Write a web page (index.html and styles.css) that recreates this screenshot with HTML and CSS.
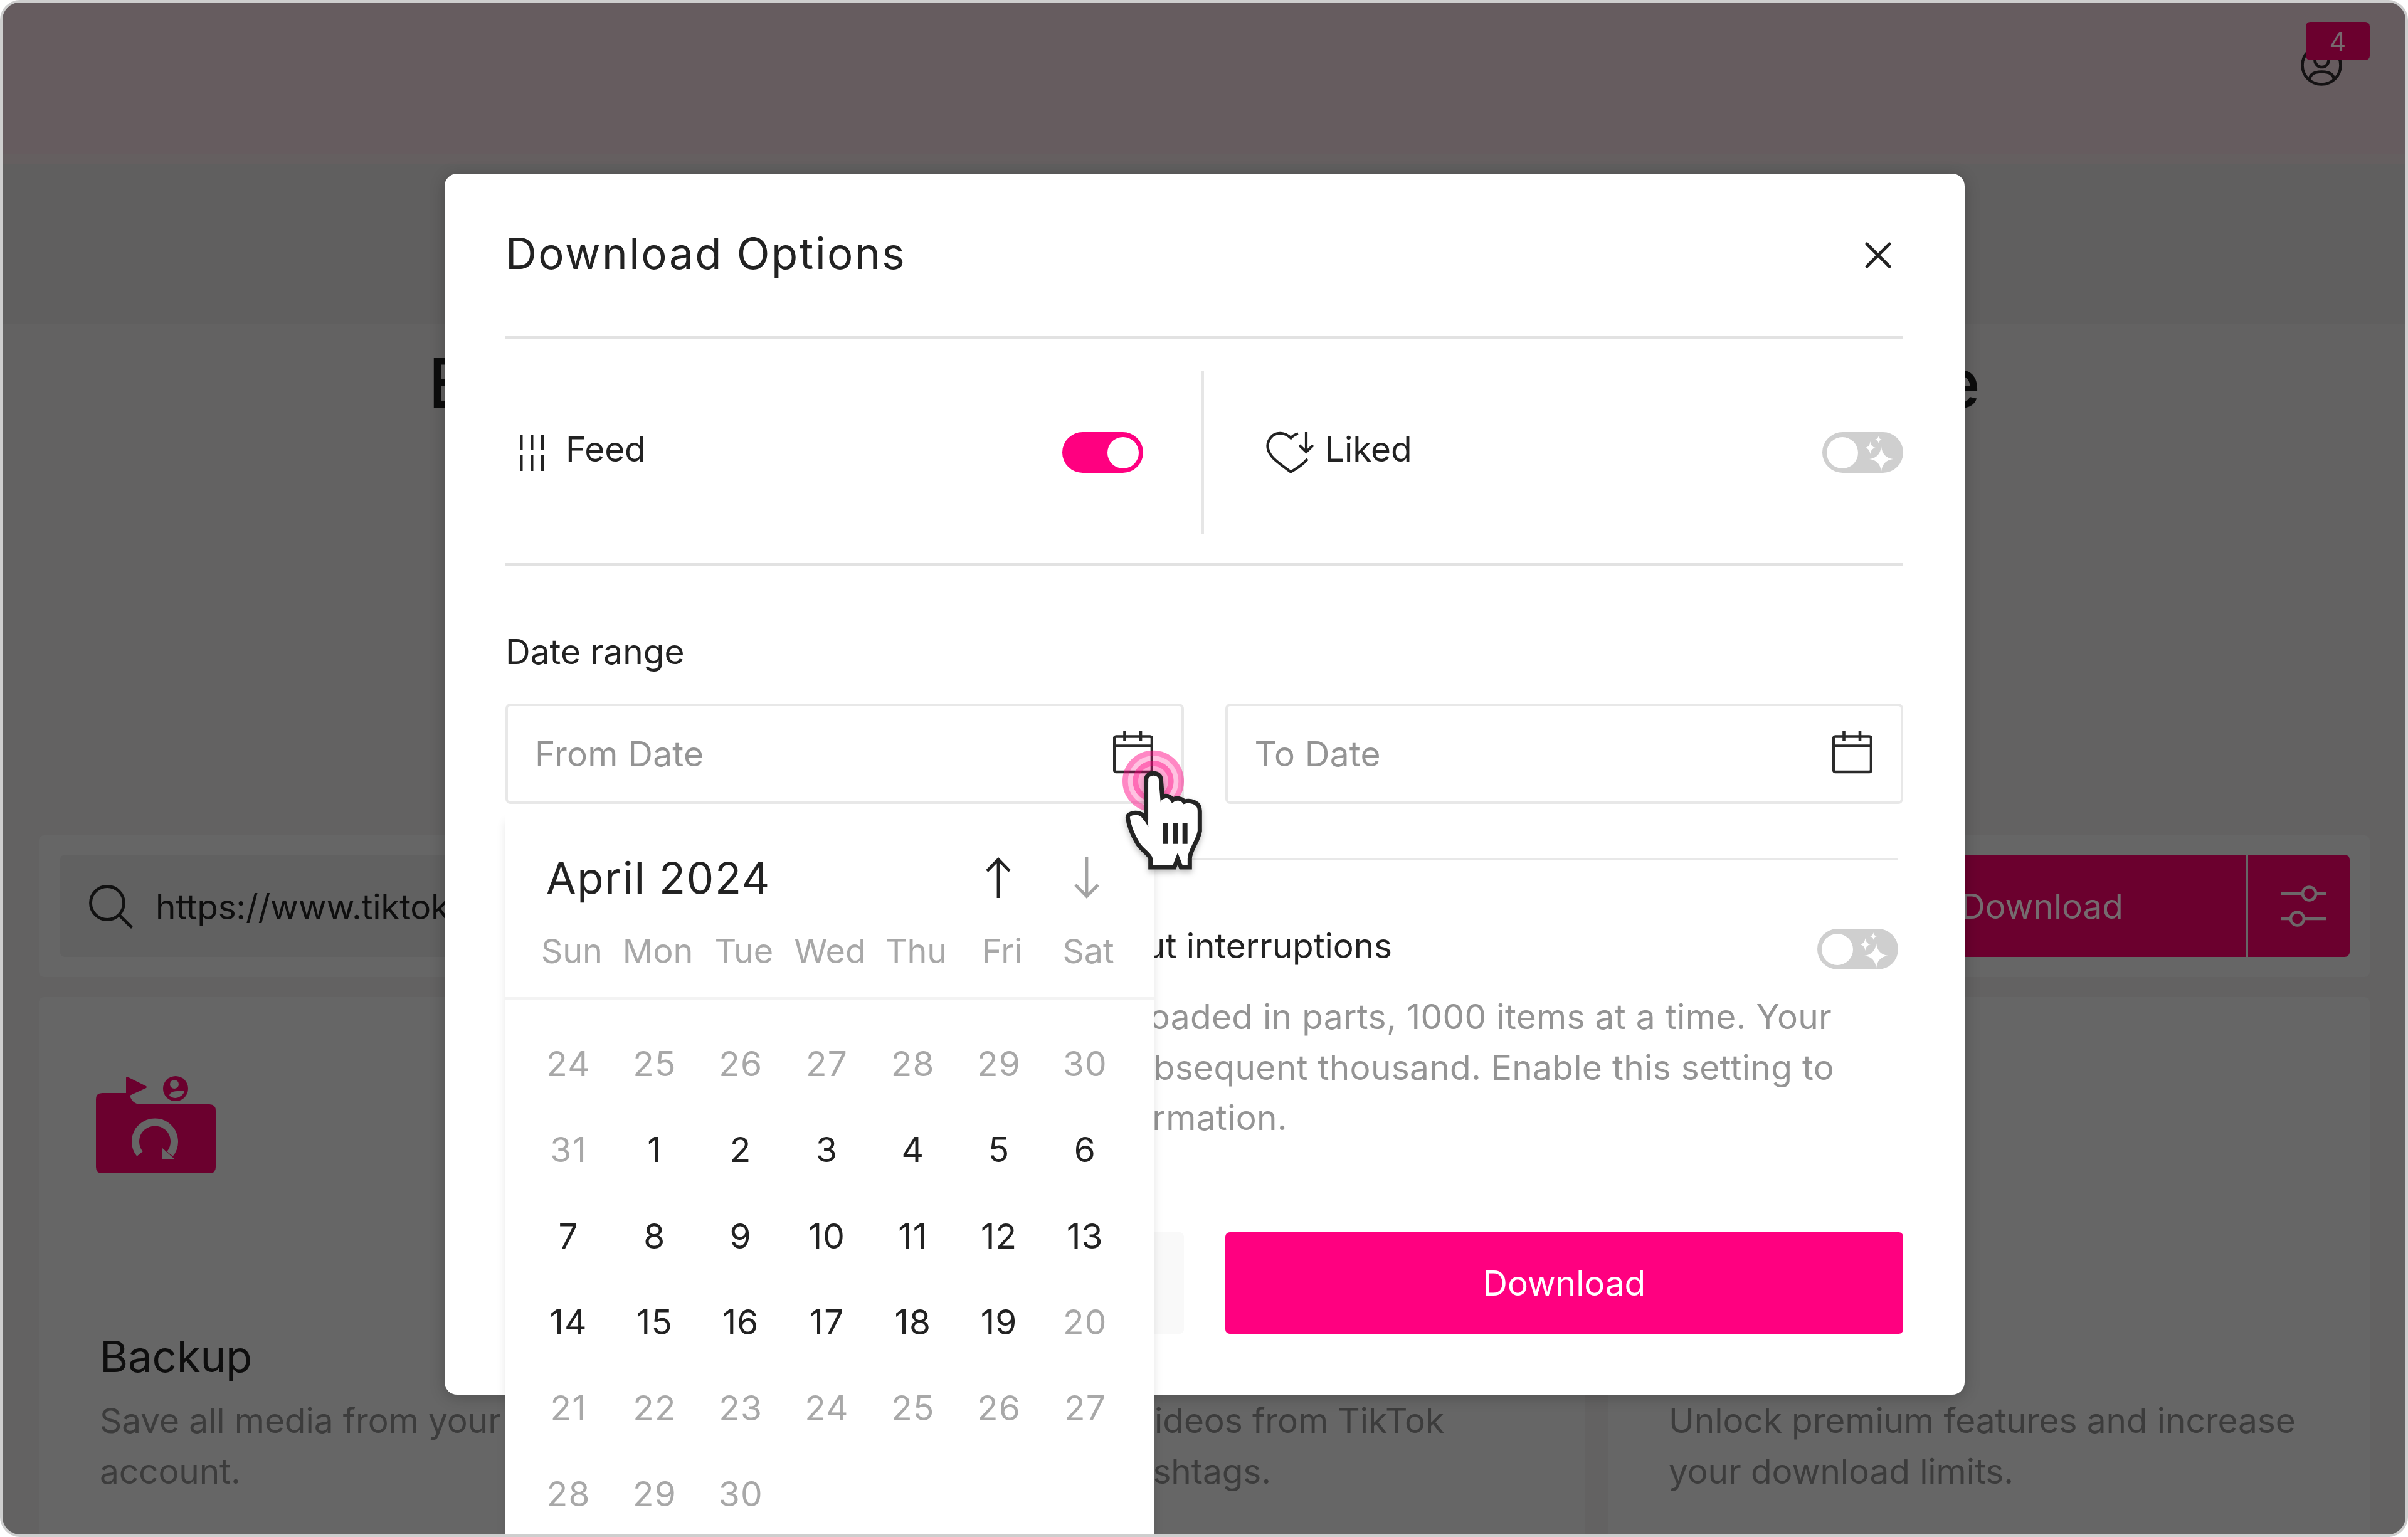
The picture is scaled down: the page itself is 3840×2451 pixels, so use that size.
FILE: index.html
```html
<!DOCTYPE html>
<html lang="en">
<head>
<meta charset="utf-8">
<title>Download Options</title>
<link rel="stylesheet" href="styles.css">
</head>
<body>
<svg class="defs" width="0" height="0" aria-hidden="true">
  <symbol id="calendar" viewBox="0 0 64 68">
    <path d="M5 8.500H59a3 3 0 0 1 3 3V62a3 3 0 0 1-3 3H5a3 3 0 0 1-3-3V11.500a3 3 0 0 1 3-3ZM2 23.500H62M18.500 0V16M44 0V16" fill="none" stroke="currentColor" stroke-width="4.600"/>
  </symbol>
  <symbol id="sparkles" viewBox="0 0 48 60">
    <path d="M25 20Q27 38 44 40Q27 42 25 60Q23 42 6 40Q23 38 25 20ZM7.500 12Q8.500 21 16 22Q8.500 23 7.500 32Q6.500 23-1 22Q6.500 21 7.500 12ZM20.500 3Q21 8 26 9Q21 10 20.500 15Q20 10 15 9Q20 8 20.500 3Z" fill="#fff"/>
  </symbol>
</svg>
<div class="frame">
  <div class="app">
    <header class="topbar">
      <div class="account">
        <svg width="68" height="68" viewBox="0 0 68 68" fill="none" stroke="#141213" stroke-width="4.600"><circle cx="34" cy="34" r="30.500"/><circle cx="34.500" cy="26" r="11"/><path d="M15 58C15 49 22 44.500 34.500 44.500S54 49 54 58"/></svg>
        <span class="badge">4</span>
      </div>
    </header>
    <div class="hero"></div>
    <h1 class="headline">Easily download TikTok videos in one place</h1>
    <div class="search-card">
      <div class="search-field">
        <svg width="72" height="72" viewBox="0 0 72 72" fill="none" stroke="#111" stroke-width="4.800" stroke-linecap="round"><circle cx="30" cy="31" r="26.500"/><path d="M49 50L68 69"/></svg>
        <span>https://www.tiktok.com/</span>
      </div>
      <div class="search-button">Download</div>
      <div class="search-options">
        <svg width="74" height="66" viewBox="0 0 74 66" fill="none" stroke="#6d6769" stroke-width="4.600"><path d="M1 13H35M58 13H73M1 53H16M39 53H73"/><circle cx="46.500" cy="13" r="10.500"/><circle cx="27.500" cy="53" r="10.500"/></svg>
      </div>
    </div>
    <div class="cards">
      <section class="card">
        <svg class="card-icon" width="192" height="156" viewBox="0 0 192 156" fill="#6b002e">
          <path d="M50 1Q48 0 48 3V27H10Q0 27 0 37V145Q0 155 10 155H181Q191 155 191 145V55Q191 45 181 45H72Q58 45 54 31L80 19Q82 17.500 80 16Z"/>
          <circle cx="127" cy="20" r="20"/>
          <circle cx="125" cy="13" r="7" fill="#666"/>
          <path d="M117 31Q118 22 141 24Q139 33 127 35Q121 35 117 31Z" fill="#666"/>
          <path d="M70 124A31 31 0 1 1 118 124" fill="none" stroke="#666" stroke-width="12"/>
          <path d="M105 114V133H126Z" fill="#666"/>
        </svg>
        <h2>Backup</h2>
        <p>Save all media from your<br>account.</p>
      </section>
      <section class="card card-search">
        <p><span class="l1">ideos from TikTok</span><span class="l2">shtags.</span></p>
      </section>
      <section class="card">
        <p>Unlock premium features and increase<br>your download limits.</p>
      </section>
    </div>
  </div>

  <div class="modal">
    <div class="modal-head">
      <h2>Download Options</h2>
      <svg width="44" height="44" viewBox="0 0 44 44" fill="none" stroke="#222" stroke-width="5" stroke-linecap="round"><path d="M4 4L40 40M40 4L4 40"/></svg>
    </div>
    <div class="sources">
      <div class="source feed">
        <svg width="40" height="58" viewBox="0 0 40 58" stroke="#222" stroke-width="4"><path d="M2.500 0V25M19.500 0V25M36 0V25M2.500 33V58M19.500 33V58M36 33V58"/></svg>
        <span class="label">Feed</span>
        <span class="toggle on"><i></i></span>
      </div>
      <div class="split"></div>
      <div class="source liked">
        <svg width="78" height="68" viewBox="0 0 78 68" fill="none" stroke="#222" stroke-width="4.200"><path d="M51 3.500Q43 6 39.500 10.500C30 1 16 0 8 9C-2 21 3 34 12 43C20 51 29 57 39.500 64.500C51 58 59 52 66 44"/><path d="M64 1V32M53 22L64 32.500L75 22"/></svg>
        <span class="label">Liked</span>
        <span class="toggle"><i></i><svg width="48" height="60"><use href="#sparkles"/></svg></span>
      </div>
    </div>
    <div class="range-title">Date range</div>
    <div class="range">
      <div class="field">
        <span>From Date</span>
        <svg class="cal" width="64" height="68"><use href="#calendar"/></svg>
        <div class="picker">
          <div class="picker-head">
            <div class="month">
              <span>April 2024</span>
              <svg class="up" width="40" height="66" viewBox="0 0 40 66" fill="none" stroke="#222" stroke-width="4.800"><path d="M20 65V4M2 22L20 3.500L38 22"/></svg>
              <svg class="down" width="40" height="66" viewBox="0 0 40 66" fill="none" stroke="#a3a3a3" stroke-width="4.800"><path d="M20 0V62M2 44L20 62.500L38 44"/></svg>
            </div>
            <div class="week names"><span>Sun</span><span>Mon</span><span>Tue</span><span>Wed</span><span>Thu</span><span>Fri</span><span>Sat</span></div>
          </div>
          <div class="week days">
            <span class="off">24</span><span class="off">25</span><span class="off">26</span><span class="off">27</span><span class="off">28</span><span class="off">29</span><span class="off">30</span>
            <span class="off">31</span><span>1</span><span>2</span><span>3</span><span>4</span><span>5</span><span>6</span>
            <span>7</span><span>8</span><span>9</span><span>10</span><span>11</span><span>12</span><span>13</span>
            <span>14</span><span>15</span><span>16</span><span>17</span><span>18</span><span>19</span><span class="off">20</span>
            <span class="off">21</span><span class="off">22</span><span class="off">23</span><span class="off">24</span><span class="off">25</span><span class="off">26</span><span class="off">27</span>
            <span class="off">28</span><span class="off">29</span><span class="off">30</span>
          </div>
        </div>
      </div>
      <div class="field">
        <span>To Date</span>
        <svg class="cal" width="64" height="68"><use href="#calendar"/></svg>
      </div>
    </div>
    <div class="batch">
      <div class="batch-head">
        <span class="batch-title">ut interruptions</span>
        <span class="toggle"><i></i><svg width="48" height="60"><use href="#sparkles"/></svg></span>
      </div>
      <p class="batch-text"><span class="t1">oaded in parts, 1000 items at a time. Your</span><span class="t2">bsequent thousand. Enable this setting to</span><span class="t3">rmation.</span></p>
    </div>
    <div class="actions">
      <div class="btn cancel"></div>
      <div class="btn primary">Download</div>
    </div>
  </div>

  <svg class="pointer" width="400" height="340" viewBox="0 0 1200 1020">
    <circle cx="567" cy="497" r="147" fill="#ff0080" fill-opacity=".24"/>
    <circle cx="567" cy="497" r="134" fill="none" stroke="#ff0080" stroke-opacity=".3" stroke-width="26"/>
    <circle cx="567" cy="497" r="98" fill="#ff0080" fill-opacity=".12"/>
    <circle cx="567" cy="497" r="85" fill="none" stroke="#ff0080" stroke-opacity=".36" stroke-width="26"/>
    <g class="hand">
      <path d="M554 909V868C550 848 512 828 492 795C468 755 450 705 445 672C445 650 480 645 500 651C516 656 527 666 533 680V490C533 450 604 450 604 490L611 576C625 560 650 570 660 587C675 575 705 578 715 595C740 587 790 594 790 640V735C785 780 742 828 742 868V909H700L684 868L668 909Z" fill="#fff" stroke="#242424" stroke-width="21" stroke-linejoin="miter"/>
      <path d="M533 650V665Q541 678 544 716Q530 690 510 668Z" fill="#242424"/>
      <path d="M544 680V500H594L600 600H700V720H560Z" fill="#fff"/>
      <path d="M600 600Q612 572 632 588Q645 594 657 608Q668 592 690 596Q703 600 716 618L720 650H600Z" fill="#fff"/>
      <path d="M626 697V797M672 697V797M719 697V797" stroke="#242424" stroke-width="24"/>
    </g>
  </svg>
</div>
</body>
</html>
```
FILE: styles.css
```css
* { box-sizing: border-box; }
body { margin: 0; background: #fff; font-family: Inter, "Liberation Sans", sans-serif; font-size: 55px; font-weight: 400; color: #222; letter-spacing: -.1px; }
h1, h2, p { margin: 0; font-weight: 400; }
svg { display: block; flex: none; }
.defs { position: absolute; }
.frame { position: relative; width: 3840px; height: 2451px; border: 4px solid #cecece; border-radius: 32px; overflow: hidden; background: #636262; }

/* dimmed page behind the dialog */
.topbar { height: 258px; background: linear-gradient(#665c5f 241px, #655f60 241px); display: flex; justify-content: flex-end; padding: 66px 100px 0 0; }
.account { position: relative; width: 68px; height: 68px; }
.badge { position: absolute; left: 9px; top: -35px; width: 102px; height: 61px; border-radius: 7px; background: #6b002e; color: #77686e; font-size: 41px; line-height: 63px; text-align: center; letter-spacing: 0; }
.hero { height: 255px; background: #605f5f; }
.headline { width: 2475px; margin: 33px auto 0 679px; font-size: 109px; line-height: 120px; font-weight: 500; color: #0c0c0c; white-space: nowrap; text-align-last: justify; }
.search-card { margin: 662px 57px 0 58px; height: 226px; padding: 31px 32px 32px 34px; background: #666; border-radius: 8px; display: flex; }
.search-field { flex: 1; background: #616161; border-radius: 8px; display: flex; align-items: center; padding-left: 45px; gap: 35px; color: #0e0e0e; line-height: 64px; letter-spacing: -.3px; }
.search-field span { padding-top: 2px; }
.search-button { width: 652px; padding-left: 2px; background: #6b002e; color: #756b6f; display: flex; align-items: center; justify-content: center; }
.search-options { width: 162px; margin-left: 4px; padding-left: 14px; background: #6b002e; border-radius: 0 8px 8px 0; display: flex; align-items: center; justify-content: center; }
.cards { margin: 32px 57px 0 58px; display: grid; grid-template-columns: repeat(3, minmax(0, 1fr)); gap: 36px; height: 900px; }
.card { background: #666; border-radius: 8px; padding: 126px 97px 0; display: flex; flex-direction: column; }
.card-icon { margin-left: -6px; }
.card h2 { margin-top: 251px; font-size: 69px; line-height: 80px; color: #0e0e0e; letter-spacing: -.2px; }
.card p { margin-top: 22px; line-height: 81px; color: #3c3c3c; white-space: nowrap; }
.card:not(:first-child) p { margin-top: 509px; }
.card-search p span { display: block; text-align: right; }
.card-search .l1 { width: 893px; }
.card-search .l2 { width: 617px; }

/* dialog */
.modal { position: absolute; left: 705px; top: 273px; width: 2424px; height: 1947px; background: #fff; border-radius: 20px; padding: 0 98px 0 97px; box-shadow: 0 4px 24px rgba(0,0,0,.22); }
.modal-head { height: 263px; border-bottom: 4px solid #e2e2e2; display: flex; align-items: center; justify-content: space-between; padding: 0 18px 6px 0; }
.modal-head h2 { font-size: 69px; line-height: 84px; letter-spacing: 2.5px; }
.modal-head svg { margin-top: 6px; }
.sources { height: 362px; border-bottom: 4px solid #e2e2e2; display: flex; align-items: center; }
.source { display: flex; align-items: center; }
.feed { flex: 0 0 1110px; padding: 5px 93px 0 23px; }
.liked { flex: 1; padding: 5px 0 0 99px; }
.split { width: 4px; height: 260px; margin-top: 3px; background: #e6e6e6; }
.label { flex: 1; line-height: 70px; margin: -11px 0 0 33px; }
.liked .label { margin-left: 16px; }
.toggle { width: 129px; height: 65px; border-radius: 33px; background: #cfcfcf; display: flex; align-items: center; padding: 0 7px; }
.toggle i { width: 50px; height: 50px; border-radius: 50%; background: #fff; }
.toggle svg { margin-left: 12px; }
.toggle.on { background: #ff0080; justify-content: flex-end; }
.range-title { margin-top: 102px; line-height: 70px; letter-spacing: 0; }
.range { margin-top: 48px; display: grid; grid-template-columns: 1fr 1fr; gap: 66px; }
.field { position: relative; height: 160px; border: 4px solid #e8e8e8; border-radius: 8px; display: flex; align-items: center; justify-content: space-between; padding: 0 45px 0 43px; color: #949494; letter-spacing: .2px; }
.cal { color: #2a2a2a; margin-bottom: 5px; }
.batch { margin: 86px 8px 0 0; border-top: 4px solid #e8e8e8; height: 597px; }
.batch-head { display: flex; justify-content: space-between; padding-top: 109px; height: 209px; }
.batch-title { width: 1414px; text-align: right; line-height: 60px; margin-top: -3px; }
.batch-text { line-height: 80.5px; color: #949494; white-space: nowrap; letter-spacing: .3px; }
.batch-text span { display: block; text-align: right; }
.t1 { width: 2115px; }
.t2 { width: 2119px; }
.t3 { width: 1247px; }
.actions { display: grid; grid-template-columns: 1fr 1fr; gap: 66px; }
.btn { height: 162px; border-radius: 7px; display: flex; align-items: center; justify-content: center; color: #fff; }
.cancel { background: #f9f9f9; }
.primary { background: #ff0080; }

/* calendar popup */
.picker { position: absolute; left: -4px; top: 164px; width: 1035px; height: 1200px; background: #fff; box-shadow: 0 20px 14px rgba(0,0,0,.1); color: #222; letter-spacing: 1.2px; }
.picker-head { height: 304px; border-bottom: 4px solid #f3f3f3; }
.month { display: flex; align-items: center; padding: 68px 88px 0 65px; font-size: 69px; line-height: 84px; letter-spacing: 1.7px; }
.month span { flex: 1; }
.down { margin-left: 101px; }
.week { display: grid; grid-template-columns: repeat(7, 137.3px); text-align: center; }
.names { margin-top: 35px; padding-left: 37px; line-height: 80px; color: #a8a8a8; font-size: 54px; letter-spacing: -.2px; }
.days { padding: 34px 0 0 32px; grid-auto-rows: 137.3px; line-height: 137.3px; }
.off { color: #a8a8a8; }

.pointer { position: absolute; left: 1646px; top: 1076px; }
.hand { filter: drop-shadow(0 14px 14px rgba(0,0,0,.25)); }
```
